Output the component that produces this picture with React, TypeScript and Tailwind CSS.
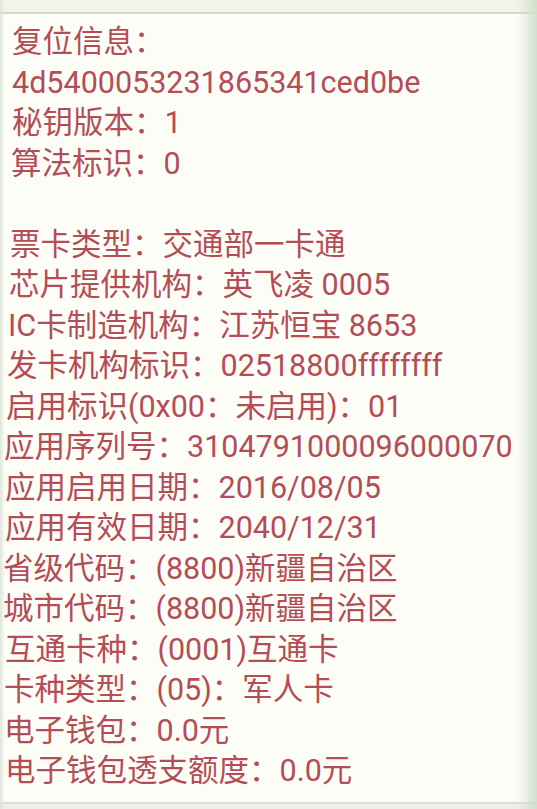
import React from 'react'

type Row = { text: string; indent: string }

// the photo is taken at a slight angle, so lower lines start further left
const rows: Row[] = [
  { text: '复位信息：', indent: 'ml-[12px]' },
  { text: '4d5400053231865341ced0be', indent: 'ml-[12px]' },
  { text: '秘钥版本：1', indent: 'ml-[12px]' },
  { text: '算法标识：0', indent: 'ml-[11px]' },
  { text: '', indent: 'ml-[11px]' },
  { text: '票卡类型：交通部一卡通', indent: 'ml-[10px]' },
  { text: '芯片提供机构：英飞凌 0005', indent: 'ml-[9px]' },
  { text: 'IC卡制造机构：江苏恒宝 8653', indent: 'ml-[8px]' },
  { text: '发卡机构标识：02518800ffffffff', indent: 'ml-[7px]' },
  { text: '启用标识(0x00：未启用)：01', indent: 'ml-[6px]' },
  { text: '应用序列号：3104791000096000070', indent: 'ml-[4px]' },
  { text: '应用启用日期：2016/08/05', indent: 'ml-[5px]' },
  { text: '应用有效日期：2040/12/31', indent: 'ml-[5px]' },
  { text: '省级代码：(8800)新疆自治区', indent: 'ml-[3px]' },
  { text: '城市代码：(8800)新疆自治区', indent: 'ml-[3px]' },
  { text: '互通卡种：(0001)互通卡', indent: 'ml-[5px]' },
  { text: '卡种类型：(05)：军人卡', indent: 'ml-[4px]' },
  { text: '电子钱包：0.0元', indent: 'ml-[4px]' },
  { text: '电子钱包透支额度：0.0元', indent: 'ml-[5px]' },
]

export default function App() {
  return (
    <div className="relative flex h-[809px] w-full flex-col overflow-hidden bg-[#fdfdf8]">
      {/* top bar of the phone screen */}
      <div className="h-[14px] shrink-0 border-b-2 border-[#d6d7cf] bg-[#f4f3e8]" />

      <div className="flex flex-1 flex-col pt-[8px] font-['Roboto','Noto_Sans_CJK_SC',sans-serif] text-[30.5px] leading-[40.5px] text-[#b44d55]">
        {rows.map((r, i) => (
          <div key={i} className={`h-[40.5px] whitespace-nowrap ${r.indent}`}>
            {r.text}
          </div>
        ))}
      </div>

      <div className="h-[7px] shrink-0 border-t-2 border-[#dcddd6] bg-[#eeefe8]" />

      {/* bezel edges */}
      <div className="pointer-events-none absolute inset-y-0 left-0 w-[5px] bg-gradient-to-r from-[#dfe6da] to-transparent" />
      <div className="pointer-events-none absolute inset-y-0 right-0 w-[20px] bg-gradient-to-r from-transparent to-[#cfe0cc]" />
    </div>
  )
}
